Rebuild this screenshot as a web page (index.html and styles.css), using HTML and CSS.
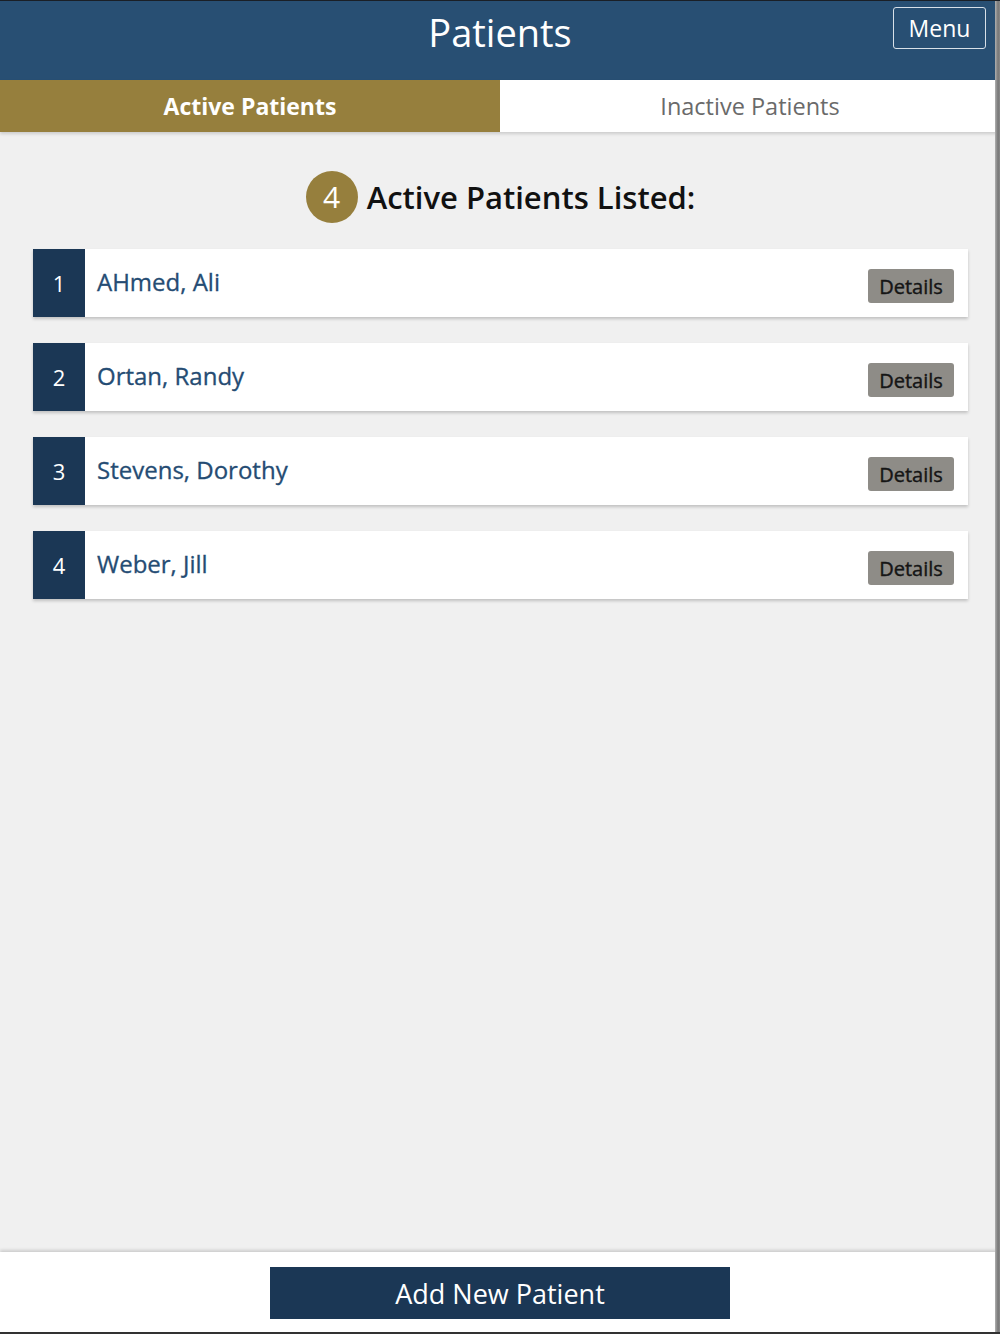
FILE: index.html
```html
<!DOCTYPE html>
<html lang="en">
<head>
    <meta charset="UTF-8">
    <meta name="viewport" content="width=device-width, initial-scale=1.0">
    <title>Patients</title>
    <link rel="stylesheet" href="styles.css">
</head>
<body>
    <div class="app">
        <!-- top bar -->
        <header class="topbar">
            <span></span>
            <h1 class="topbar-title">Patients</h1>
            <button type="button" class="menu-btn">Menu</button>
        </header>
        <!-- tabs -->
        <nav class="tabs">
            <a class="tab tab-active">Active Patients</a>
            <a class="tab">Inactive Patients</a>
        </nav>
        <!-- list -->
        <main class="content">
            <h2 class="count-heading">
                <span class="count-badge">4</span>
                <span>Active Patients Listed:</span>
            </h2>
            <ul class="patient-list">
                <li class="patient-row">
                    <span class="patient-num">1</span>
                    <span class="patient-name">AHmed, Ali</span>
                    <button type="button" class="details-btn">Details</button>
                </li>
                <li class="patient-row">
                    <span class="patient-num">2</span>
                    <span class="patient-name">Ortan, Randy</span>
                    <button type="button" class="details-btn">Details</button>
                </li>
                <li class="patient-row">
                    <span class="patient-num">3</span>
                    <span class="patient-name">Stevens, Dorothy</span>
                    <button type="button" class="details-btn">Details</button>
                </li>
                <li class="patient-row">
                    <span class="patient-num">4</span>
                    <span class="patient-name">Weber, Jill</span>
                    <button type="button" class="details-btn">Details</button>
                </li>
            </ul>
        </main>
        <!-- bottom bar -->
        <footer class="bottombar">
            <button type="button" class="add-btn">Add New Patient</button>
        </footer>
    </div>
</body>
</html>
```

FILE: styles.css
```css
/* page */
body {
    margin: 0;
    padding: 0;
    font-family: "Open Sans", "Liberation Sans", sans-serif;
    background-color: #f0f0f0;
}
.app {
    box-sizing: border-box;
    width: 1000px;
    height: 1334px;
    display: flex;
    flex-direction: column;
    border-top: 1px solid #1a1f26;
    border-bottom: 2px solid #333;
    background-color: #f0f0f0;
    position: relative;
}
/* grey edge drawn over the right side */
.app::after {
    content: "";
    position: absolute;
    top: 0;
    right: 0;
    bottom: 0;
    width: 5px;
    background: linear-gradient(to right, #b0b0b0, #777 60%, #8a8a8a);
    z-index: 5;
}
/* top bar */
.topbar {
    height: 79px;
    background-color: #284f73;
    display: grid;
    grid-template-columns: 1fr auto 1fr;
    flex-shrink: 0;
}
.topbar-title {
    margin: 0;
    padding-top: 5px;
    color: #fff;
    font-size: 38px;
    font-weight: 500;
    line-height: 52px;
}
.menu-btn {
    justify-self: end;
    align-self: start;
    margin: 6px 14px 0 0;
    width: 93px;
    height: 42px;
    padding: 0;
    background: transparent;
    border: 1px solid #d8e0e8;
    border-radius: 3px;
    color: #fff;
    font-family: inherit;
    font-size: 23px;
    line-height: 38px;
}
/* tabs */
.tabs {
    display: grid;
    grid-template-columns: 500px 1fr;
    height: 52px;
    flex-shrink: 0;
    box-shadow: 0 2px 3px rgba(0, 0, 0, 0.15);
    position: relative;
}
.tab {
    display: flex;
    justify-content: center;
    align-items: center;
    background-color: #fff;
    color: #6a6a6a;
    font-size: 23.5px;
}
.tab-active {
    background-color: #967f3d;
    color: #fff;
    font-size: 23px;
    font-weight: 700;
}
/* list */
.content {
    flex: 1;
    padding: 0 32px 0 33px;
}
.count-heading {
    margin: 39px 0 26px;
    display: flex;
    justify-content: center;
    align-items: center;
    gap: 9px;
    font-size: 31px;
    font-weight: 600;
    color: #111;
    line-height: 52px;
}
.count-badge {
    width: 52px;
    height: 52px;
    border-radius: 50%;
    background-color: #967f3d;
    color: #fff;
    font-size: 30px;
    font-weight: 400;
    display: flex;
    justify-content: center;
    align-items: center;
}
.patient-list {
    list-style: none;
    margin: 0;
    padding: 0;
    display: flex;
    flex-direction: column;
    gap: 26px;
}
.patient-row {
    height: 68px;
    display: flex;
    align-items: center;
    background-color: #fff;
    box-shadow: 0 2px 3px rgba(0, 0, 0, 0.2);
}
.patient-num {
    width: 52px;
    align-self: stretch;
    display: flex;
    justify-content: center;
    align-items: center;
    background-color: #1b3755;
    color: #fff;
    font-size: 22px;
}
.patient-name {
    flex: 1;
    margin-left: 12px;
    margin-bottom: 4px;
    color: #254c73;
    font-size: 24px;
    -webkit-text-stroke: 0.3px #254c73;
}
.details-btn {
    width: 86px;
    height: 34px;
    margin: 6px 14px 0 0;
    padding: 0;
    background-color: #8e8c87;
    border: none;
    border-radius: 3px;
    color: #151515;
    font-family: inherit;
    font-size: 20px;
    -webkit-text-stroke: 0.4px #151515;
}
/* bottom bar */
.bottombar {
    height: 80px;
    flex-shrink: 0;
    background-color: #fff;
    box-shadow: 0 -2px 3px rgba(0, 0, 0, 0.15);
    display: flex;
    justify-content: center;
    padding-top: 15px;
    box-sizing: border-box;
    position: relative;
}
.add-btn {
    width: 460px;
    height: 52px;
    background-color: #1b3755;
    border: none;
    color: #fff;
    font-family: inherit;
    font-size: 27px;
}
```
